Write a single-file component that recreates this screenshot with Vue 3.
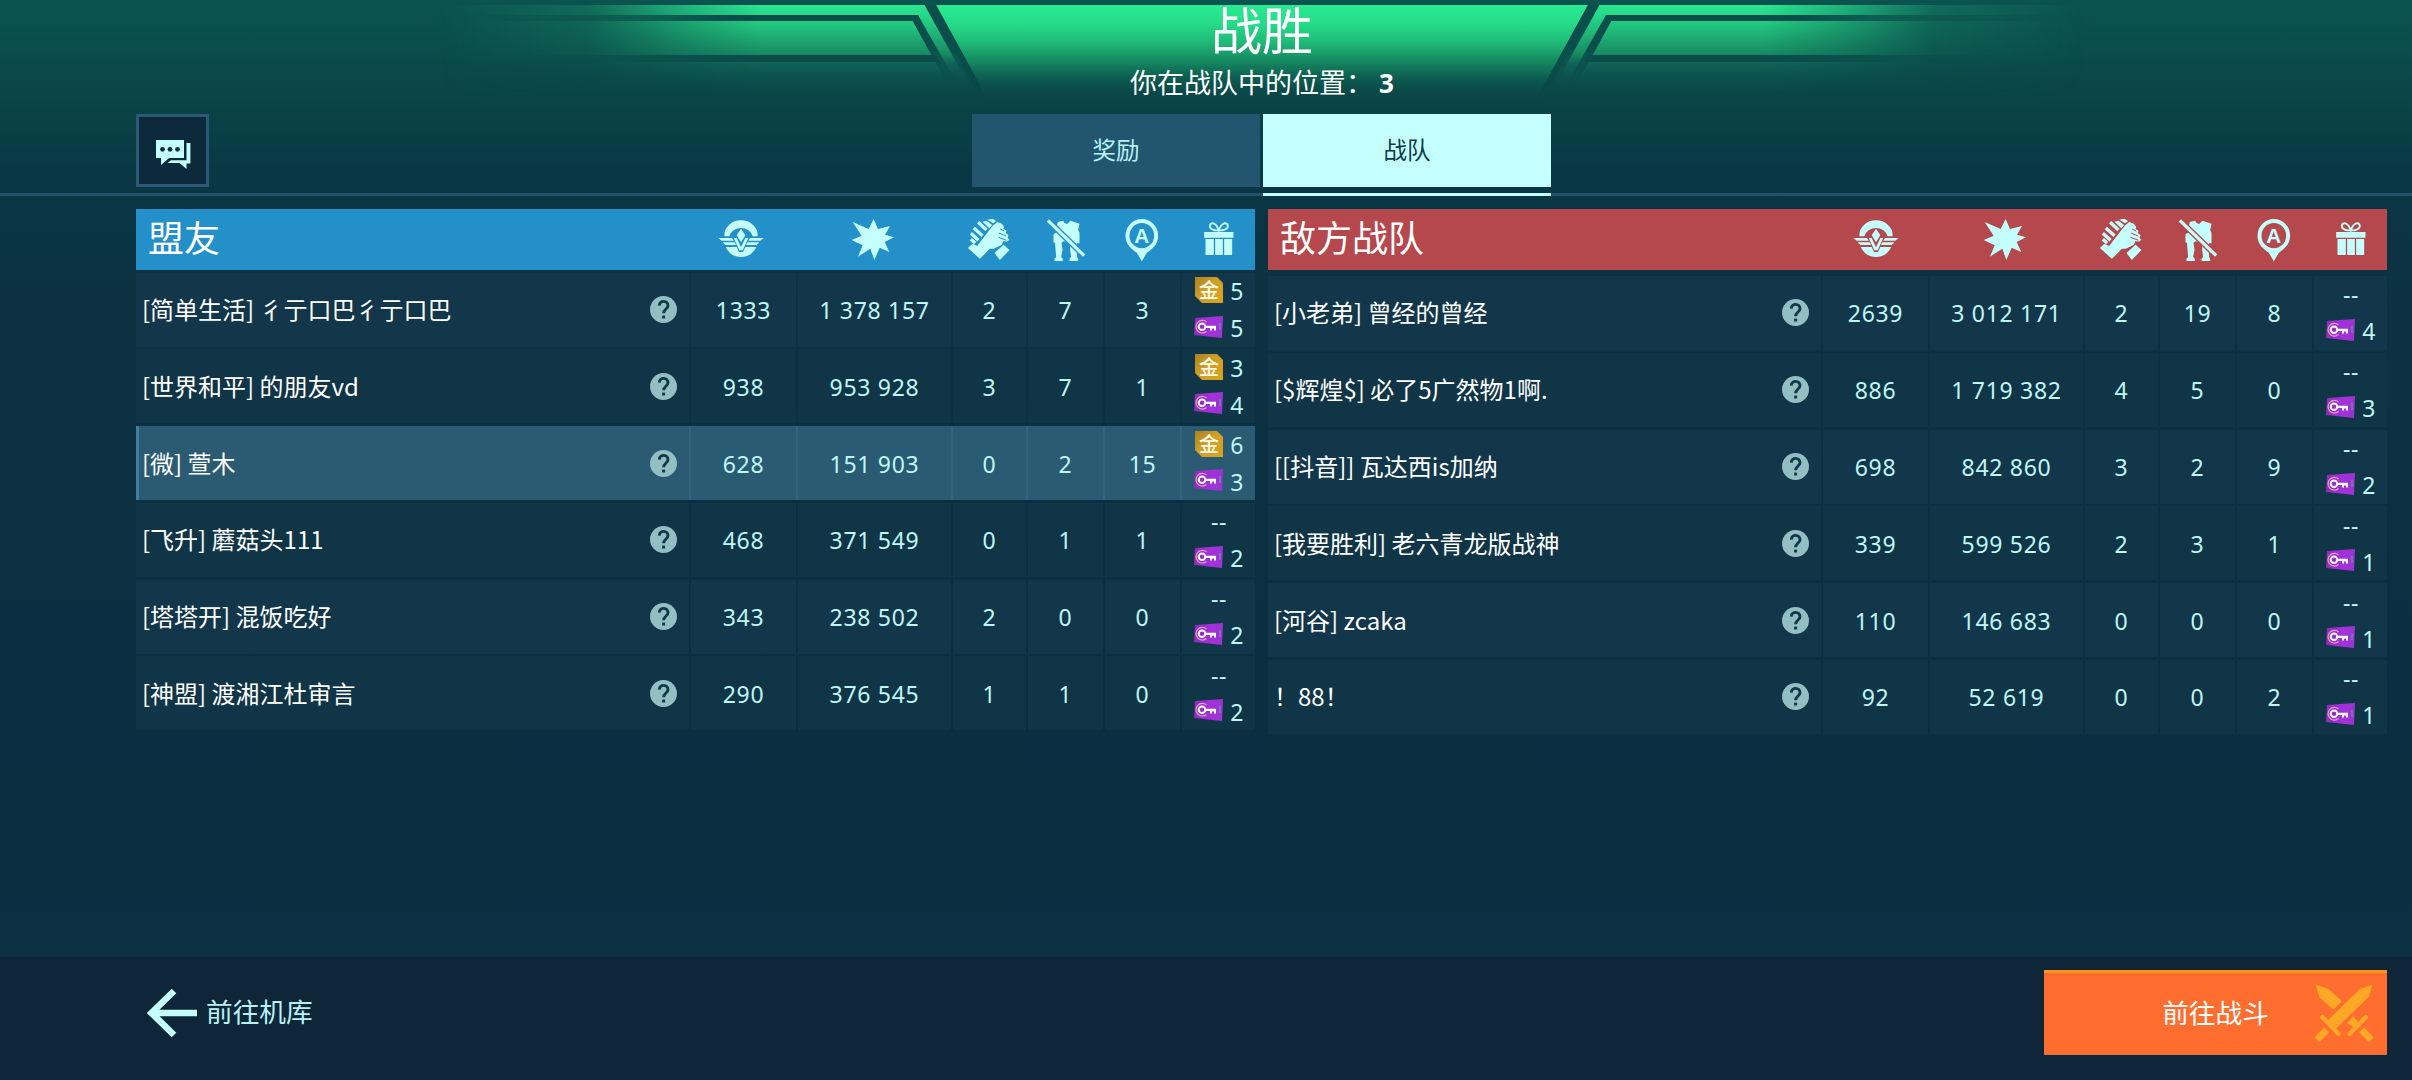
<script setup>
const teams = [
  {
    id: 'allies',
    title: '盟友',
    rows: [
      { name: '[简单生活] 彳亍口巴彳亍口巴', score: '1333', damage: '1 378 157', assists: 2, kills: 7, beacons: 3, gold: 5, keys: 5 },
      { name: '[世界和平] 的朋友vd', score: '938', damage: '953 928', assists: 3, kills: 7, beacons: 1, gold: 3, keys: 4 },
      { name: '[微] 萱木', score: '628', damage: '151 903', assists: 0, kills: 2, beacons: 15, gold: 6, keys: 3, me: true },
      { name: '[飞升] 蘑菇头111', score: '468', damage: '371 549', assists: 0, kills: 1, beacons: 1, gold: 0, keys: 2 },
      { name: '[塔塔开] 混饭吃好', score: '343', damage: '238 502', assists: 2, kills: 0, beacons: 0, gold: 0, keys: 2 },
      { name: '[神盟] 渡湘江杜审言', score: '290', damage: '376 545', assists: 1, kills: 1, beacons: 0, gold: 0, keys: 2 },
    ],
  },
  {
    id: 'enemies',
    title: '敌方战队',
    rows: [
      { name: '[小老弟] 曾经的曾经', score: '2639', damage: '3 012 171', assists: 2, kills: 19, beacons: 8, gold: 0, keys: 4 },
      { name: '[$辉煌$] 必了5广然物1啊.', score: '886', damage: '1 719 382', assists: 4, kills: 5, beacons: 0, gold: 0, keys: 3 },
      { name: '[[抖音]] 瓦达西is加纳', score: '698', damage: '842 860', assists: 3, kills: 2, beacons: 9, gold: 0, keys: 2 },
      { name: '[我要胜利] 老六青龙版战神', score: '339', damage: '599 526', assists: 2, kills: 3, beacons: 1, gold: 0, keys: 1 },
      { name: '[河谷] zcaka', score: '110', damage: '146 683', assists: 0, kills: 0, beacons: 0, gold: 0, keys: 1 },
      { name: '！88！', score: '92', damage: '52 619', assists: 0, kills: 0, beacons: 2, gold: 0, keys: 1 },
    ],
  },
]
const stats = ['score', 'damage', 'assists', 'kills', 'beacons']
</script>

<template>
  <div class="screen">
    <header class="top">
      <svg class="banner" viewBox="0 0 2412 110" width="2412" height="110" aria-hidden="true">
        <defs>
          <linearGradient id="fall" x1="0" y1="5" x2="0" y2="100" gradientUnits="userSpaceOnUse">
            <stop offset="0" stop-color="#29ea91" />
            <stop offset=".18" stop-color="#26dd8a" />
            <stop offset=".38" stop-color="#1fbd78" />
            <stop offset=".6" stop-color="#158a61" stop-opacity=".95" />
            <stop offset=".74" stop-color="#0f6a55" stop-opacity=".8" />
            <stop offset="1" stop-color="#0a4848" stop-opacity="0" />
          </linearGradient>
          <linearGradient id="sideFall" x1="0" y1="5" x2="0" y2="98" gradientUnits="userSpaceOnUse">
            <stop offset="0" stop-color="#2be592" />
            <stop offset=".12" stop-color="#25d788" />
            <stop offset=".3" stop-color="#20b577" />
            <stop offset=".53" stop-color="#178a62" />
            <stop offset=".63" stop-color="#11695a" stop-opacity=".8" />
            <stop offset="1" stop-color="#0b4c4a" stop-opacity="0" />
          </linearGradient>
          <linearGradient id="sideFade" x1="440" y1="0" x2="940" y2="0" gradientUnits="userSpaceOnUse">
            <stop offset="0" stop-color="#fff" stop-opacity="0" />
            <stop offset=".3" stop-color="#fff" stop-opacity=".18" />
            <stop offset=".5" stop-color="#fff" stop-opacity=".7" />
            <stop offset=".64" stop-color="#fff" />
          </linearGradient>
          <mask id="sideMask"><rect x="400" y="0" width="600" height="110" fill="url(#sideFade)" /></mask>
          <linearGradient id="barFade" x1="420" y1="0" x2="720" y2="0" gradientUnits="userSpaceOnUse">
            <stop offset="0" stop-color="#0a4d4b" stop-opacity="0" />
            <stop offset="1" stop-color="#0a4d4b" />
          </linearGradient>
          <linearGradient id="slashFade" x1="0" y1="50" x2="0" y2="98" gradientUnits="userSpaceOnUse">
            <stop offset="0" stop-color="#0a4f4c" />
            <stop offset="1" stop-color="#0a4a49" stop-opacity="0" />
          </linearGradient>
          <g id="wing">
            <path d="M400 5H930L980 98H400Z" fill="url(#sideFall)" mask="url(#sideMask)" />
            <path d="M400 15H918L920 21H400ZM400 55H936L940 62H400Z" fill="url(#barFade)" />
            <path d="M911 18L918 15L965 98H955Z" fill="url(#slashFade)" />
            <path d="M924.500 5H936L987 98H976Z" fill="url(#slashFade)" />
          </g>
        </defs>
        <path d="M936 5H1588L1537 98H987Z" fill="url(#fall)" />
        <use href="#wing" />
        <use href="#wing" transform="matrix(-1 0 0 1 2524 0)" />
      </svg>

      <h1 class="result">战胜</h1>
      <p class="place">你在战队中的位置： <b>3</b></p>

      <div class="nav">
        <button class="chat" type="button">
          <svg viewBox="0 0 73 73" width="73" height="73">
            <path d="M20 26H48V44H33L25 51V44H20Z" fill="#c4fffd" />
            <path d="M50.500 29H54.400V49.500H50.500V55L43.500 49H31.500L35 46.200H50.500Z" fill="#c4fffd" />
            <circle cx="26.500" cy="35.300" r="2.400" fill="#0b3140" />
            <circle cx="34" cy="35.300" r="2.400" fill="#0b3140" />
            <circle cx="41.500" cy="35.300" r="2.400" fill="#0b3140" />
          </svg>
        </button>
        <div class="tabs">
          <div class="tab">奖励</div>
          <div class="tab active">战队</div>
        </div>
      </div>
      <div class="rule"><span class="mark"></span></div>
    </header>

    <main class="boards">
      <section v-for="team in teams" :key="team.id" class="team" :class="team.id">
        <div class="grid head">
          <h2>{{ team.title }}</h2>
          <svg class="emblem" viewBox="0 3 150 183" width="50" height="61">
            <path d="M25 82A50 45 0 0 1 125 82L124 85H110A36 33 0 0 0 40 85H26Z" />
            <path d="M75 62L88 82L75 103L62 82Z" />
            <path d="M7 90H48L53 98H17ZM20 103H56L60 111H28ZM143 90H102L97 98H133ZM130 103H94L90 111H122Z" />
            <path d="M53 90H62L75 118L88 90H97L80 127H70Z" />
            <path d="M29 117H62L69 132H81L88 117H121Q106 147 75 147Q44 147 29 117Z" />
          </svg>
          <svg class="blast" viewBox="0 3 150 183" width="50" height="61">
            <path d="M77 33L90 63L126 54L111 80L138 88L110 102L124 132L95 119L79 156L67 122L30 146L44 112L11 96L41 83L14 42L62 63Z" />
          </svg>
          <svg viewBox="13.500 3 150 183" width="50" height="61">
            <path d="M22 120L36 107L50 114L96 54L110 42L124 47L131 57L129 63L138 68L136 75L144 82L141 90L147 95L139 101L129 99L124 110L100 122L88 122L72 139L58 152Z" />
            <path d="M102 135L129 110L147 126L118 156Z" />
            <path d="M31 94L44 105M31 76L54 97M40 60L66 83M53 43L78 66" fill="none" stroke="currentColor" stroke-width="10" />
            <path d="M66 41L78 38L95 51L86 61ZM80 35L96 32L107 39L98 46Z" />
            <path d="M119 63L131 69M115 75L137 84M114 88L138 97" fill="none" stroke="var(--team)" stroke-width="3" />
          </svg>
          <svg viewBox="241.500 3 150 183" width="50" height="61">
            <path d="M292 42L308 38L312 45L320 48L330 38L344 43L357 47L353 66L357 74V106H349V130L350 148L353 152V159H327V152L332 147L329 126V102L309 100L303 104L306 125L302 147L307 152V159H282V152L287 147L284 112V106L279 103V79L290 72L286 65Z" />
            <path d="M262 37L371 143" stroke="var(--team)" stroke-width="18" />
            <path d="M262 37L371 143" stroke="currentColor" stroke-width="10" />
          </svg>
          <svg viewBox="472.500 3 150 183" width="50" height="61">
            <path fill-rule="evenodd" d="M544 33A49 50 0 0 1 593 83C593 109 573 125 559 134L544 160L529 134C515 125 495 109 495 83A49 50 0 0 1 544 33ZM544 45A37 38 0 1 0 544 121A37 38 0 1 0 544 45Z" />
            <text x="544" y="104" text-anchor="middle" font-size="62" font-weight="700">A</text>
          </svg>
          <svg viewBox="700.500 3 150 183" width="50" height="61">
            <path d="M731 72H819V89H731ZM735 93H760V141H735ZM764 93H787V141H764ZM791 93H815V141H791Z" />
            <path d="M775 67C766 41 750 42 748 53C747 65 764 68 775 67C786 68 803 65 802 53C800 42 784 41 775 67Z" fill="none" stroke="currentColor" stroke-width="5.500" />
          </svg>
        </div>

        <div v-for="row in team.rows" :key="row.name" class="grid row" :class="{ me: row.me }">
          <div class="cell player">
            <span class="name">{{ row.name }}</span>
            <svg class="help" viewBox="0 0 27 27" width="27" height="27">
              <circle cx="13.500" cy="13.500" r="13.500" fill="#93bfc3" />
              <path d="M9.300 9.600C9.500 3.800 18.200 4.100 18 9.800C17.900 12.900 13.700 13.200 13.600 17.300" fill="none" stroke="#11384a" stroke-width="2.900" />
              <path d="M12.100 19.600H15.100V22.500H12.100Z" fill="#11384a" />
            </svg>
          </div>
          <div v-for="s in stats" :key="s" class="cell">{{ row[s] }}</div>
          <div class="cell loot">
            <div v-if="row.gold" class="prize">
              <svg viewBox="0 0 28 26" width="28" height="26">
                <defs>
                  <linearGradient id="gold" x1="0" y1="0" x2="1" y2="1">
                    <stop offset="0" stop-color="#a98220" />
                    <stop offset=".45" stop-color="#cf9f28" />
                    <stop offset="1" stop-color="#dba21c" />
                  </linearGradient>
                </defs>
                <path d="M0 0H22L28 6V26H7L0 19Z" fill="url(#gold)" />
                <text x="14" y="20.500" text-anchor="middle" class="jin">金</text>
              </svg>
              <span>{{ row.gold }}</span>
            </div>
            <div v-else class="prize none">--</div>
            <div class="prize">
              <svg class="key" viewBox="0 0 29 22" width="29" height="22">
                <defs>
                  <linearGradient id="violet" x1="0" y1="0" x2="1" y2="0">
                    <stop offset="0" stop-color="#8b2fb5" />
                    <stop offset=".6" stop-color="#a431dc" />
                    <stop offset="1" stop-color="#9a35cf" />
                  </linearGradient>
                </defs>
                <path d="M1 2L29 0L28 22L0 19Z" fill="url(#violet)" />
                <path d="M12.500 6A6.300 6.300 0 1 0 12.500 15.500" fill="none" stroke="#e99ac8" stroke-width="1.300" />
                <path d="M26 7V14" stroke="#7d6fb8" stroke-width="2" />
                <circle cx="8" cy="10.800" r="3.300" fill="none" stroke="#fff" stroke-width="2" />
                <path d="M11 9.800H22V14.500H20V12.600H18V14.500H16V12H11Z" fill="#fff" />
              </svg>
              <span>{{ row.keys }}</span>
            </div>
          </div>
        </div>
      </section>
    </main>

    <footer class="bottom">
      <div class="back">
        <svg viewBox="0 0 49 48" width="49" height="48">
          <path d="M26 2L3.500 24L26 46M4 24H49" fill="none" stroke="#c4fffd" stroke-width="6.600" />
        </svg>
        <span>前往机库</span>
      </div>
      <button class="battle" type="button">
        <span>前往战斗</span>
        <svg viewBox="883 104 180 177" width="60" height="59">
          <g fill="#ffa826" stroke="#ffa826">
            <path d="M888 106L926 118L967 156L941 181L899 143Z" stroke="none" />
            <path d="M982 222L1000 201L1026 227L1012 239Z" stroke="none" />
            <path d="M1039 203L990 254" stroke-width="13" stroke-linecap="round" />
            <path d="M1026 242L1055 271" stroke-width="21" />
            <path d="M1058 106L1020 120L925 212L950 237L1048 142Z" stroke="none" />
            <path d="M908 203L957 254" stroke-width="13" stroke-linecap="round" />
            <path d="M921 242L892 271" stroke-width="21" />
          </g>
        </svg>
      </button>
    </footer>
  </div>
</template>

<style>
body {
  margin: 0;
}
</style>

<style scoped>
.screen {
  position: relative;
  display: flex;
  flex-direction: column;
  width: 2412px;
  height: 1080px;
  overflow: hidden;
  background: linear-gradient(180deg, #0b534f 0, #0a4d4b 50px, #0a4346 110px, #093945 165px, #0a3544 205px, #0c3242 300px, #0b3042 480px, #0b2e41 880px, #0c3143 957px);
  color: #f2fdff;
  font-family: "Noto Sans CJK SC", sans-serif;
}
h1, h2, p {
  margin: 0;
  font-weight: 400;
}
button {
  padding: 0;
  font: inherit;
  color: inherit;
}
svg {
  display: block;
  overflow: visible;
}

.top {
  display: flex;
  flex-direction: column;
  height: 196px;
}
.banner {
  position: absolute;
  left: 0;
  top: 0;
}
.result,
.place {
  position: relative;
  margin-left: 112px;
  text-align: center;
  color: #fff;
}
.result {
  height: 64px;
  font-size: 51px;
  line-height: 57px;
}
.place {
  height: 50px;
  font-size: 27px;
  line-height: 35px;
}
.place b {
  font-family: "Noto Sans", sans-serif;
  font-size: 26px;
}
.nav {
  position: relative;
  display: flex;
  height: 73px;
  padding-left: 136px;
}
.chat {
  box-sizing: border-box;
  width: 73px;
  height: 73px;
  border: 3px solid #2a5a75;
  background: #0c2a3c;
}
.chat svg {
  margin: -3px;
}
.tabs {
  display: flex;
  gap: 3px;
  margin-left: 763px;
}
.tab {
  width: 288px;
  font-size: 23.500px;
  line-height: 70px;
  text-align: center;
  color: #b5f3f7;
  background: #24556f;
}
.tab.active {
  color: #0d3a48;
  background: #c4fffd;
}
.rule {
  height: 3px;
  margin-top: 6px;
  background: #24526a;
}
.mark {
  display: block;
  width: 288px;
  height: 3px;
  margin-left: 1263px;
  background: #c4fffd;
}

.boards {
  display: flex;
  flex: none;
  gap: 13px;
  height: 748px;
  padding: 13px 0 0 136px;
  box-sizing: border-box;
}
.team {
  --team: #2490c9;
  display: flex;
  flex-direction: column;
  gap: 2.800px;
  width: 1119px;
}
.enemies {
  --team: #b4484d;
}
.grid {
  display: grid;
  grid-template-columns: 553px 105px 153px 73px 75px 75px 73px;
  column-gap: 2px;
}
.head {
  height: 61px;
  margin-bottom: -.3px;
  align-items: center;
  justify-items: center;
  color: #c4fffd;
  background: var(--team);
}
.enemies .head {
  margin-bottom: 3.200px;
}
.head svg {
  fill: currentColor;
  font-family: "Liberation Sans", sans-serif;
}
.allies .emblem {
  margin-right: 5px;
}
.blast {
  margin-right: 3px;
}
.head h2 {
  justify-self: start;
  align-self: start;
  padding-left: 12px;
  font-size: 36px;
  line-height: 55px;
  color: #fff;
}
.row {
  height: 74px;
}
.cell {
  display: flex;
  align-items: center;
  justify-content: center;
  padding-top: 1px;
  box-sizing: border-box;
  height: 74px;
  background: #12374a;
  color: #bff6f6;
  font-family: "Noto Sans", sans-serif;
  font-size: 23px;
  letter-spacing: .7px;
  white-space: pre;
}
.row:nth-child(odd) .cell {
  background: #103546;
}
.row.me .cell {
  background: #2a5b73;
}
.row.me {
  background: #32657d;
}
.row.me .player {
  box-shadow: inset 3px 0 #427d9d;
}
.player {
  justify-content: space-between;
  padding: 0 12px 0 6px;
  color: #fff;
  font-family: "Noto Sans CJK SC", sans-serif;
  font-size: 24px;
  letter-spacing: 0;
}
.name {
  margin-top: -2px;
}
.loot {
  flex-direction: column;
  padding: 0;
}
.prize {
  display: flex;
  align-items: center;
  justify-content: space-between;
  box-sizing: border-box;
  width: 100%;
  height: 37px;
  padding: 0 11px 0 12.500px;
}
.prize svg {
  margin-top: -2px;
  letter-spacing: 0;
}
.prize .key {
  margin: -3px 0 0 -1px;
}
.none {
  justify-content: center;
  padding: 0 0 0 1px;
}
.jin {
  fill: #fffbe8;
  font-family: "Noto Sans CJK TC", sans-serif;
  font-size: 20px;
  font-weight: 500;
}

.bottom {
  display: flex;
  justify-content: space-between;
  height: 123px;
  padding: 13px 25px 0 148px;
  background: #0f2538;
  box-sizing: border-box;
  margin-top: 13px;
}
.back {
  display: flex;
  align-items: center;
  gap: 9px;
  height: 85px;
  color: #b5f3f7;
  font-size: 26.700px;
  line-height: 38px;
}
.back span,
.battle span {
  margin-top: -3px;
}
.battle {
  display: grid;
  grid-template-columns: 1fr auto 1fr;
  align-items: center;
  box-sizing: border-box;
  width: 343px;
  height: 85px;
  border: 0;
  border-top: 3px solid #f8941f;
  border-bottom: 1px solid #d97052;
  background: #ff6d2f;
  font-size: 26.700px;
  line-height: 38px;
  color: #fff;
}
.battle span {
  grid-column: 2;
}
.battle svg {
  justify-self: end;
  margin-right: 13px;
}
</style>
